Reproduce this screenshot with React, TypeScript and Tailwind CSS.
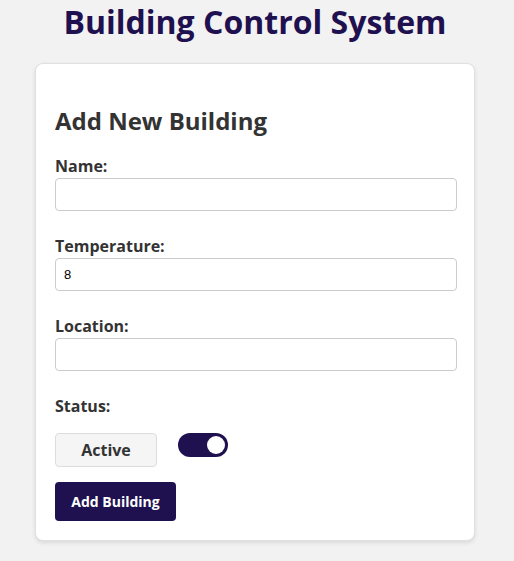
export default function App() {
  const font = { fontFamily: '"Open Sans", "Liberation Sans", sans-serif' };
  const inputFont = { fontFamily: '"Liberation Sans", Arial, sans-serif' };
  return (
    <div className="min-h-[561px] bg-[#f2f2f2]" style={font}>
      <div className="w-[510px] flex flex-col items-center">
        <h1 className="text-[32px] leading-[43px] font-bold text-[#1f1150] mt-0">Building Control System</h1>
        <div className="mt-[20px] w-[440px] bg-white rounded-[8px] border border-[#e0e0e0] shadow-[0_2px_4px_rgba(0,0,0,0.1)] px-[19px] pt-[41px] pb-[19px]">
          <h2 className="text-[24px] leading-[32px] font-bold text-[#333] mb-[17px]">Add New Building</h2>
          <label className="block text-[16px] leading-[24px] font-bold text-[#333]">Name:</label>
          <input className="block w-[402px] h-[33px] border border-[#ccc] rounded-[4px] px-[8px] text-[13px]" style={inputFont} />
          <label className="block text-[16px] leading-[24px] font-bold text-[#333] mt-[23px]">Temperature:</label>
          <input className="block w-[402px] h-[33px] border border-[#ccc] rounded-[4px] px-[8px] text-[13px] text-black" defaultValue="8" style={inputFont} />
          <label className="block text-[16px] leading-[24px] font-bold text-[#333] mt-[23px]">Location:</label>
          <input className="block w-[402px] h-[33px] border border-[#ccc] rounded-[4px] px-[8px] text-[13px]" style={inputFont} />
          <label className="block text-[16px] leading-[24px] font-bold text-[#333] mt-[23px]">Status:</label>
          <div className="flex items-start gap-[21px] mt-[15px]">
            <button className="w-[102px] h-[34px] bg-[#f5f5f5] border border-[#ddd] rounded-[4px] text-[16px] font-bold text-[#333]">Active</button>
            <div className="w-[50px] h-[24px] rounded-full bg-[#1f1150] flex items-center justify-end pr-[3px]">
              <div className="w-[18px] h-[18px] rounded-full bg-white" />
            </div>
          </div>
          <button className="block mt-[15px] w-[121px] h-[39px] bg-[#1f1150] rounded-[4px] text-white text-[14px] font-bold">Add Building</button>
        </div>
      </div>
    </div>
  );
}
